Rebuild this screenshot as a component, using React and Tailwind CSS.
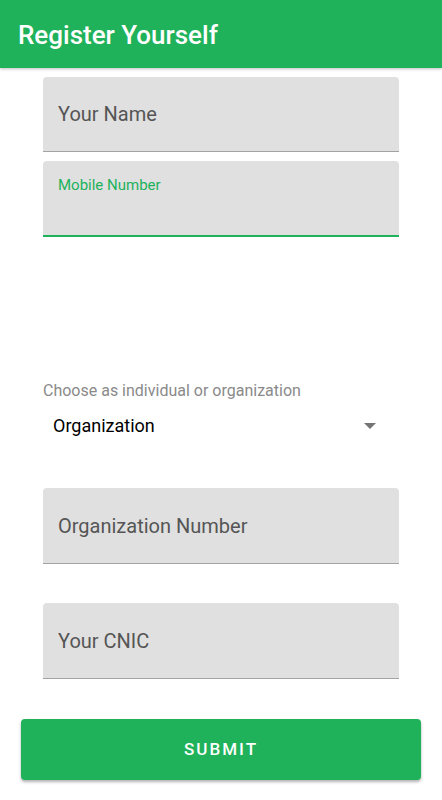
export default function App() {
  return (
    <div className="min-h-[800px] w-[442px] bg-white relative" style={{ fontFamily: "Roboto, 'Noto Sans', sans-serif" }}>
      <div className="h-[68px] bg-[#20b25b] flex items-center pl-[18px] shadow-[0_1px_3px_rgba(0,0,0,0.25)] relative z-10">
        <h1 className="text-white text-[26px] font-medium leading-none pt-[2px]">Register Yourself</h1>
      </div>
      <div className="px-[43px] flex flex-col">
        <div className="mt-[9px] h-[75px] bg-[#e0e0e0] rounded-t-[4px] border-b border-[#a3a3a3] flex items-center pl-[15px]">
          <span className="text-[20px] text-[#555555] leading-none">Your Name</span>
        </div>
        <div className="mt-[9px] h-[76px] bg-[#e0e0e0] rounded-t-[4px] border-b-2 border-[#20b25b] pl-[15px] pt-[12px]">
          <span className="text-[15px] text-[#20b25b] leading-none">Mobile Number</span>
        </div>
        <div className="mt-[146px] text-[16px] text-[#8a8a8a] leading-none">Choose as individual or organization</div>
        <div className="mt-[18px] flex items-center justify-between pl-[10px] pr-[23px]">
          <span className="text-[18px] text-black leading-none">Organization</span>
          <svg width="12" height="6" viewBox="0 0 12 6"><path d="M0 0 L12 0 L6 6 Z" fill="#757575" /></svg>
        </div>
        <div className="mt-[53px] h-[76px] bg-[#e0e0e0] rounded-t-[4px] border-b border-[#a3a3a3] flex items-center pl-[15px]">
          <span className="text-[20px] text-[#555555] leading-none">Organization Number</span>
        </div>
        <div className="mt-[39px] h-[76px] bg-[#e0e0e0] rounded-t-[4px] border-b border-[#a3a3a3] flex items-center pl-[15px]">
          <span className="text-[20px] text-[#555555] leading-none">Your CNIC</span>
        </div>
      </div>
      <div className="px-[21px] mt-[40px]">
        <button className="w-full h-[61px] bg-[#20b25b] rounded-[4px] shadow-[0_2px_3px_rgba(0,0,0,0.3)] text-white text-[17px] font-medium tracking-[0.12em] leading-none">SUBMIT</button>
      </div>
    </div>
  );
}
